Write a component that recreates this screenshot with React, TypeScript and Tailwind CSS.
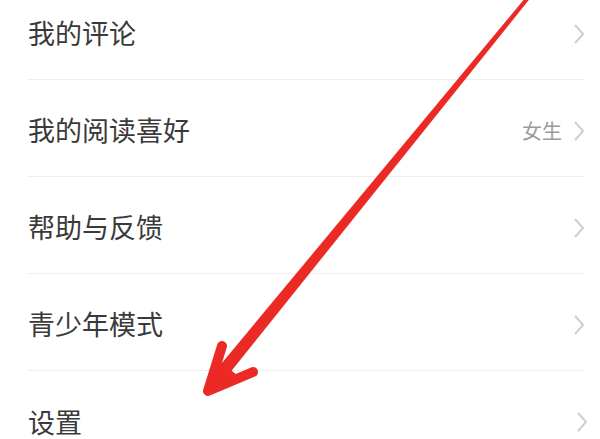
const items = [
  { label: '我的评论' },
  { label: '我的阅读喜好', value: '女生' },
  { label: '帮助与反馈' },
  { label: '青少年模式' },
  { label: '设置' },
];

function Chevron() {
  return (
    <svg width="11" height="20" viewBox="0 0 11 20" fill="none" className="shrink-0">
      <path d="M1.5 1.5 L9 10 L1.5 18.5" stroke="#cfcfcf" strokeWidth="2" strokeLinecap="round" strokeLinejoin="round" />
    </svg>
  );
}

export default function App() {
  return (
    <div
      className="relative w-[600px] h-[439px] overflow-hidden bg-white"
      style={{ fontFamily: '"Noto Sans CJK SC", "Noto Sans", sans-serif' }}
    >
      {/* List */}
      <ul className="-mt-[17px]">
        {items.map(({ label, value }, i) => (
          <li key={label} className="pl-[28px] pr-[12px]">
            <div
              className={`h-[97px] flex items-center justify-between pt-[5px] ${
                i < items.length - 1 ? 'border-b border-[#efefef] mr-[3px]' : ''
              }`}
            >
              <span className="text-[27px] text-[#3a3a3a]">{label}</span>
              <div className="flex items-center gap-[12px]">
                {value && <span className="text-[20px] text-[#9a9a9a]">{value}</span>}
                <Chevron />
              </div>
            </div>
          </li>
        ))}
      </ul>

      {/* Red arrow overlay */}
      <svg
        className="absolute inset-0 pointer-events-none"
        width="600"
        height="439"
        viewBox="0 0 600 439"
      >
        <polygon
          points="529.6,-1 526.4,-3.5 206.5,381.5 216.5,389.5"
          fill="#ec2a25"
        />
        <path
          d="M222 346 L208 391 L253 372"
          fill="none"
          stroke="#ec2a25"
          strokeWidth="10"
          strokeLinecap="round"
          strokeLinejoin="round"
        />
        <polygon points="208,391 219,360 238,376" fill="#ec2a25" />
      </svg>
    </div>
  );
}
